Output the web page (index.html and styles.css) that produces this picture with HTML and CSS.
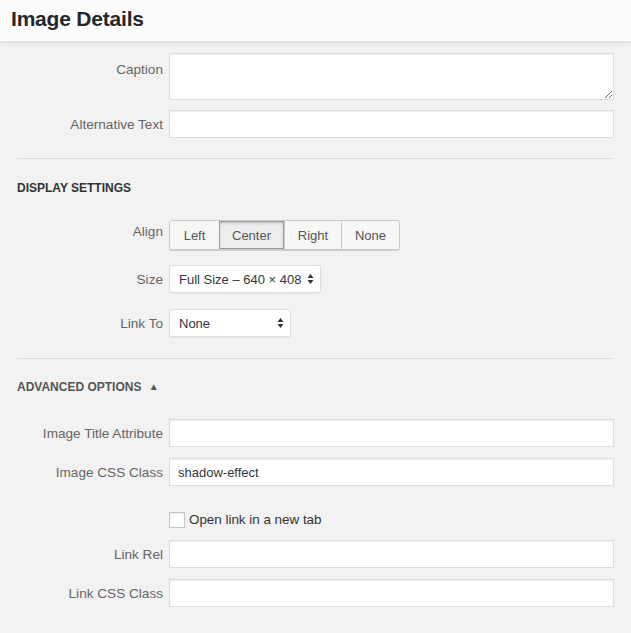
FILE: index.html
```html
<!DOCTYPE html>
<html lang="en">
<head>
  <meta charset="UTF-8" />
  <title>Image Details</title>
  <link rel="stylesheet" href="styles.css">
</head>
<body>

<header class="modal-header">
  <h1>Image Details</h1>
</header>

<div class="settings">
  <div class="row row-caption">
    <label class="label">Caption</label>
    <textarea class="field textarea"></textarea>
  </div>
  <div class="row">
    <label class="label">Alternative Text</label>
    <input class="field" type="text">
  </div>

  <div class="section">
    <h2 class="section-title">Display Settings</h2>

    <div class="row row-align">
      <label class="label">Align</label>
      <div class="button-group">
        <button class="btn">Left</button>
        <button class="btn active">Center</button>
        <button class="btn">Right</button>
        <button class="btn">None</button>
      </div>
    </div>
    <div class="row row-size">
      <label class="label">Size</label>
      <div class="select select-size">
        <span>Full Size – 640 × 408</span>
        <svg class="arrows" width="7" height="12" viewBox="0 0 7 12"><path d="M3.5 1 L6.5 5 L0.5 5 Z M3.5 11 L6.5 7 L0.5 7 Z" fill="#333"/></svg>
      </div>
    </div>
    <div class="row row-link">
      <label class="label">Link To</label>
      <div class="select select-link">
        <span>None</span>
        <svg class="arrows" width="7" height="12" viewBox="0 0 7 12"><path d="M3.5 1 L6.5 5 L0.5 5 Z M3.5 11 L6.5 7 L0.5 7 Z" fill="#333"/></svg>
      </div>
    </div>
  </div>

  <div class="section section-advanced">
    <h2 class="section-title toggle">Advanced Options <span class="caret">▲</span></h2>

    <div class="row">
      <label class="label">Image Title Attribute</label>
      <input class="field" type="text">
    </div>
    <div class="row">
      <label class="label">Image CSS Class</label>
      <input class="field" type="text" value="shadow-effect">
    </div>
    <div class="row row-check">
      <span class="label"></span>
      <label class="check"><span class="box"></span>Open link in a new tab</label>
    </div>
    <div class="row">
      <label class="label">Link Rel</label>
      <input class="field" type="text">
    </div>
    <div class="row">
      <label class="label">Link CSS Class</label>
      <input class="field" type="text">
    </div>
  </div>
</div>

</body>
</html>
```

FILE: styles.css
```css
body {
  font-family: "Liberation Sans", Arial, sans-serif;
  font-size: 13px;
  background: #f2f2f2;
  color: #444;
  margin: 0;
  padding: 0;
}
.modal-header {
  background: #fcfcfc;
  height: 41px;
  border-bottom: 1px solid #dedede;
  box-shadow: 0 2px 3px rgba(0,0,0,0.06);
  padding: 0 11px;
}
.modal-header h1 {
  margin: 0;
  font-size: 21px;
  line-height: 37px;
  font-weight: bold;
  color: #23282d;
  letter-spacing: -0.2px;
}
.settings {
  padding: 11px 17px 0;
}
.row {
  display: flex;
  align-items: flex-start;
  margin-bottom: 11px;
}
.label {
  width: 146px;
  margin-right: 6px;
  padding-top: 1px;
  text-align: right;
  color: #666;
  font-size: 13.6px;
  line-height: 27px;
  flex-shrink: 0;
}
.row-caption {
  margin-bottom: 10px;
}
.row-caption .label {
  padding-top: 3px;
}
.field {
  flex: 1;
  height: 28px;
  box-sizing: border-box;
  margin: 0;
  border: 1px solid #ddd;
  background: #fff;
  box-shadow: inset 0 1px 2px rgba(0,0,0,0.07);
  font-family: inherit;
  font-size: 13px;
  color: #32373c;
  padding: 0 8px;
  outline: none;
}
.textarea {
  height: 47px;
  resize: vertical;
}
.section {
  border-top: 1px solid #ddd;
  margin-top: 20px;
}
.section-advanced {
  margin-top: 21px;
}
.section-title {
  margin: 21px 0 24px;
  font-size: 12px;
  line-height: 16px;
  font-weight: bold;
  text-transform: uppercase;
  color: #333;
}
.section-title.toggle {
  color: #555;
  margin-top: 20px;
}
.caret {
  font-size: 10px;
  margin-left: 4px;
  vertical-align: 1px;
}
.row-align .label {
  padding-top: 0;
  line-height: 24px;
}
.row-align {
  margin-bottom: 15px;
}
.button-group {
  display: flex;
  height: 30px;
  border: 1px solid #ccc;
  border-radius: 3px;
  box-sizing: border-box;
  box-shadow: 0 1px 0 #ccc;
  background: #f7f7f7;
  overflow: hidden;
}
.btn {
  font-family: inherit;
  font-size: 13px;
  color: #555;
  background: #f7f7f7;
  border: none;
  border-left: 1px solid #ccc;
  margin: 0;
  padding: 0 12px;
  height: 28px;
}
.btn:first-child {
  border-left: none;
}
.btn.active {
  background: #eee;
  box-shadow: inset 0 2px 5px -3px rgba(0,0,0,0.5);
  border: 1px solid #999;
  height: 28px;
  padding: 0 12px;
}
.btn:nth-child(1) { width: 49px; }
.btn:nth-child(2) { width: 65px; }
.btn:nth-child(3) { width: 57px; }
.btn:nth-child(4) { width: 58px; }
.row-size {
  margin-bottom: 16px;
}
.select {
  display: flex;
  align-items: center;
  justify-content: space-between;
  box-sizing: border-box;
  height: 28px;
  padding: 0 6px 0 9px;
  background: #fff;
  border: 1px solid #ddd;
  border-radius: 3px;
  box-shadow: 0 1px 1px rgba(0,0,0,0.05);
  color: #32373c;
}
.select-size { width: 152px; }
.select-link { width: 122px; }
.row-link {
  margin-bottom: 0;
}
.row-check {
  margin: 26px 0 12px;
}
.row-check .label {
  padding-top: 0;
  line-height: 16px;
}
.check {
  display: flex;
  align-items: center;
  color: #333;
  font-size: 13.4px;
  line-height: 16px;
}
.box {
  width: 16px;
  height: 16px;
  box-sizing: border-box;
  border: 1px solid #c3c7cb;
  background: #fff;
  box-shadow: inset 0 1px 2px rgba(0,0,0,0.08);
  margin-right: 4px;
}
```
